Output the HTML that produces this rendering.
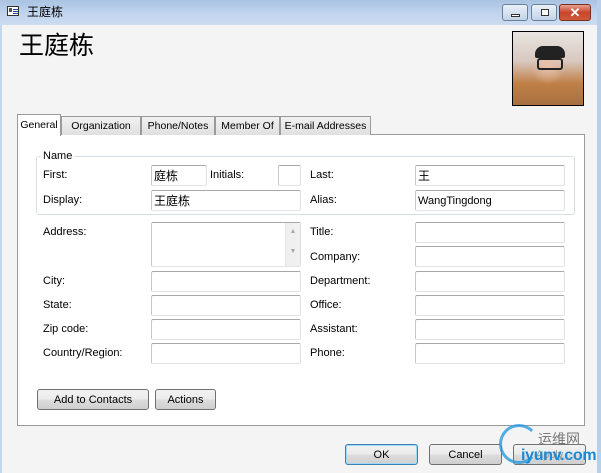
<!DOCTYPE html>
<html><head><meta charset="utf-8"><style>
*{box-sizing:border-box;margin:0;padding:0}
body{width:601px;height:473px;overflow:hidden;background:#f4f4f4;font-family:"Liberation Sans","Noto Sans CJK SC",sans-serif;font-size:11px;color:#000;position:relative}
.a{position:absolute}
.tb{position:absolute;background:#fff;border:1px solid #c8c8c8;border-top-color:#a8a8a8;border-right-color:#e0e0e0;border-bottom-color:#e3e3e3;border-radius:2px;padding:3px 0 0 2px;font-size:12px;line-height:15px}
.l{position:absolute;line-height:13px}
.tab{position:absolute;top:116px;height:19px;border:1px solid #9a9a9a;border-bottom:none;background:linear-gradient(#f2f2f2,#e0e0e0);text-align:center;line-height:18px;font-size:10.5px}
.btn{position:absolute;border:1px solid #707070;border-radius:3px;background:linear-gradient(#f2f2f2 0%,#ebebeb 50%,#dddddd 51%,#cfcfcf 100%);text-align:center;line-height:21px}
.wb{position:absolute;top:4px;height:17px;border:1px solid #6a7f9a;border-radius:3px;background:linear-gradient(#e9f0f8,#c2d3e8)}
</style></head><body>
<div class="a" style="left:0;top:0;width:601px;height:25px;background:linear-gradient(#a9c3e2,#c3d6ee 60%,#cbdcf0)"></div>
<div class="a" style="left:0;top:25px;width:2px;height:448px;background:#c4d6ec"></div>
<div class="a" style="left:597px;top:0;width:4px;height:473px;background:#b8cfea"></div>
<div class="a" style="left:7px;top:6px;width:12px;height:10px;border:1px solid #333;background:#fff"><div class="a" style="left:1px;top:1px;width:3px;height:4px;background:#555"></div><div class="a" style="left:5px;top:2px;width:5px;height:1px;background:#2040a0;box-shadow:0 2px 0 #2040a0,0 4px 0 #2040a0"></div></div>
<div class="a" style="left:27px;top:5px;font-size:12px;line-height:14px">王庭栋</div>
<div class="wb" style="left:502px;width:26px"><div class="a" style="left:8px;top:9px;width:9px;height:3px;border:1px solid #333;background:#fff"></div></div>
<div class="wb" style="left:531px;width:26px"><div class="a" style="left:9px;top:4px;width:8px;height:7px;border:1px solid #333;background:#fff"></div></div>
<div class="wb" style="left:559px;width:32px;border-color:#7a3020;background:linear-gradient(#e8a090,#c8452c 50%,#d05a3a)"><div class="a" style="left:0;width:30px;top:0;text-align:center;color:#fff;font-weight:bold;font-size:13px;line-height:15px">✕</div></div>
<div class="a" style="left:19px;top:31px;font-size:25px;line-height:30px">王庭栋</div>
<div class="a" style="left:512px;top:31px;width:72px;height:75px;border:1px solid #000;background:radial-gradient(ellipse 18px 20px at 50% 45%,#e8c0a8,transparent),linear-gradient(#e8e4e0 0%,#d8c8c0 40%,#c08048 70%,#a87040)"><div class="a" style="left:24px;top:26px;width:26px;height:12px;border:2px solid #222;border-radius:3px"></div><div class="a" style="left:22px;top:14px;width:30px;height:12px;background:#222;border-radius:8px 8px 2px 2px"></div></div>
<div class="a" style="left:17px;top:134px;width:568px;height:292px;background:#fff;border:1px solid #9a9a9a"></div>
<div class="tab" style="left:61px;width:80px">Organization</div>
<div class="tab" style="left:141px;width:74px">Phone/Notes</div>
<div class="tab" style="left:215px;width:65px">Member Of</div>
<div class="tab" style="left:280px;width:91px">E-mail Addresses</div>
<div class="tab" style="left:17px;top:114px;width:44px;height:22px;background:#fff;line-height:20px">General</div>
<div class="a" style="left:36px;top:156px;width:539px;height:59px;border:1px solid #d5dfe5;border-radius:3px"></div>
<div class="l" style="left:41px;top:150px;background:#fff;padding:0 2px">Name</div>
<div class="l" style="left:43px;top:169px">First:</div>
<div class="tb" style="left:151px;top:165px;width:56px;height:21px">庭栋</div>
<div class="l" style="left:210px;top:169px">Initials:</div>
<div class="tb" style="left:278px;top:165px;width:23px;height:21px"></div>
<div class="l" style="left:310px;top:169px">Last:</div>
<div class="tb" style="left:415px;top:165px;width:150px;height:21px">王</div>
<div class="l" style="left:43px;top:194px">Display:</div>
<div class="tb" style="left:151px;top:190px;width:150px;height:21px">王庭栋</div>
<div class="l" style="left:310px;top:194px">Alias:</div>
<div class="tb" style="left:415px;top:190px;width:150px;height:21px;font-size:11px">WangTingdong</div>
<div class="l" style="left:43px;top:226px">Address:</div>
<div class="tb" style="left:151px;top:222px;width:150px;height:45px"><div class="a" style="right:0;top:0;width:15px;height:43px;background:#f0f0f0;border-left:1px solid #e6e6e6;color:#aaa;font-size:7px;text-align:center;line-height:10px;padding-top:4px">▲<br><br>▼</div></div>
<div class="l" style="left:43px;top:275px">City:</div><div class="tb" style="left:151px;top:271px;width:150px;height:21px"></div>
<div class="l" style="left:43px;top:299px">State:</div><div class="tb" style="left:151px;top:295px;width:150px;height:21px"></div>
<div class="l" style="left:43px;top:323px">Zip code:</div><div class="tb" style="left:151px;top:319px;width:150px;height:21px"></div>
<div class="l" style="left:43px;top:347px">Country/Region:</div><div class="tb" style="left:151px;top:343px;width:150px;height:21px"></div>
<div class="l" style="left:310px;top:226px">Title:</div><div class="tb" style="left:415px;top:222px;width:150px;height:21px"></div>
<div class="l" style="left:310px;top:251px">Company:</div><div class="tb" style="left:415px;top:246px;width:150px;height:21px"></div>
<div class="l" style="left:310px;top:275px">Department:</div><div class="tb" style="left:415px;top:271px;width:150px;height:21px"></div>
<div class="l" style="left:310px;top:299px">Office:</div><div class="tb" style="left:415px;top:295px;width:150px;height:21px"></div>
<div class="l" style="left:310px;top:323px">Assistant:</div><div class="tb" style="left:415px;top:319px;width:150px;height:21px"></div>
<div class="l" style="left:310px;top:347px">Phone:</div><div class="tb" style="left:415px;top:343px;width:150px;height:21px"></div>
<div class="btn" style="left:37px;top:389px;width:112px;height:21px">Add to Contacts</div>
<div class="btn" style="left:155px;top:389px;width:61px;height:21px">Actions</div>
<div class="btn" style="left:345px;top:444px;width:73px;height:21px;border-color:#3c7fb1;box-shadow:inset 0 0 0 1px #a0d8f8">OK</div>
<div class="btn" style="left:429px;top:444px;width:73px;height:21px">Cancel</div>
<div class="btn" style="left:513px;top:444px;width:73px;height:21px;color:#999">Apply</div>
<div class="a" style="left:499px;top:424px;width:40px;height:40px;border-radius:50%;border:3px solid #2a9be0;border-right-color:transparent;opacity:.8"></div>
<div class="a" style="left:538px;top:431px;font-size:14px;color:#777;line-height:17px">运维网</div>
<div class="a" style="left:521px;top:446px;font-size:16px;font-weight:bold;color:#1a8ad8;line-height:20px;letter-spacing:-0.3px">iyunv.com</div>
</body></html>
